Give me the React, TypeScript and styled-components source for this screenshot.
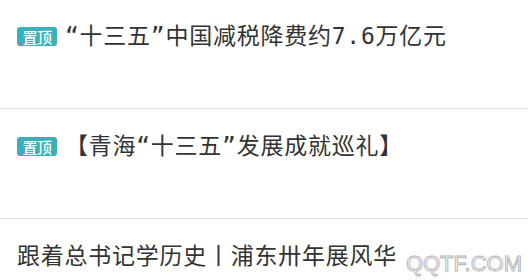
import React from 'react';
import styled, { createGlobalStyle } from 'styled-components';

const GlobalStyle = createGlobalStyle`
  html, body {
    margin: 0;
    padding: 0;
    background: #fff;
  }
  body {
    font-family: "Noto Sans CJK SC", "Noto Sans", sans-serif;
  }
`;

const Page = styled.div`
  position: relative;
  width: 528px;
  height: 280px;
  overflow: hidden;
  background: #fff;
`;

const List = styled.ul`
  list-style: none;
  margin: -1px 0 0;
  padding: 0;
`;

const Item = styled.li`
  display: flex;
  align-items: flex-start;
  height: 110px;
  box-sizing: border-box;
  padding: 24px 0 0 17px;
  border-bottom: 1px solid #dedede;
`;

const Badge = styled.span`
  flex: none;
  display: inline-flex;
  align-items: center;
  justify-content: center;
  width: 40px;
  height: 19px;
  margin-top: 4px;
  margin-right: 8px;
  border-radius: 3px;
  background: #38b1b8;
  color: #fff;
  font-size: 15px;
  font-weight: 500;
  letter-spacing: -0.5px;
  line-height: 1;
`;

const Title = styled.span`
  font-family: "DejaVu Sans Mono", "Noto Sans CJK SC", monospace;
  font-size: 23px;
  line-height: 26px;
  letter-spacing: 0.75px;
  color: #333;
  white-space: nowrap;
`;

const Watermark = styled.div`
  position: absolute;
  right: 6px;
  bottom: 3px;
  font-family: "Liberation Sans", Arial, sans-serif;
  font-size: 22px;
  color: #fff;
  -webkit-text-stroke: 1px #b4b4b4;
`;

const items = [
  { title: '“十三五”中国减税降费约7.6万亿元', pinned: true },
  { title: '【青海“十三五”发展成就巡礼】', pinned: true },
  { title: '跟着总书记学历史丨浦东卅年展风华', pinned: false },
];

const App = () => (
  <Page>
    <GlobalStyle />
    <List>
      {items.map((item) => (
        <Item key={item.title}>
          {item.pinned && <Badge>置顶</Badge>}
          <Title>{item.title}</Title>
        </Item>
      ))}
    </List>
    <Watermark>QQTF.COM</Watermark>
  </Page>
);

export default App;
